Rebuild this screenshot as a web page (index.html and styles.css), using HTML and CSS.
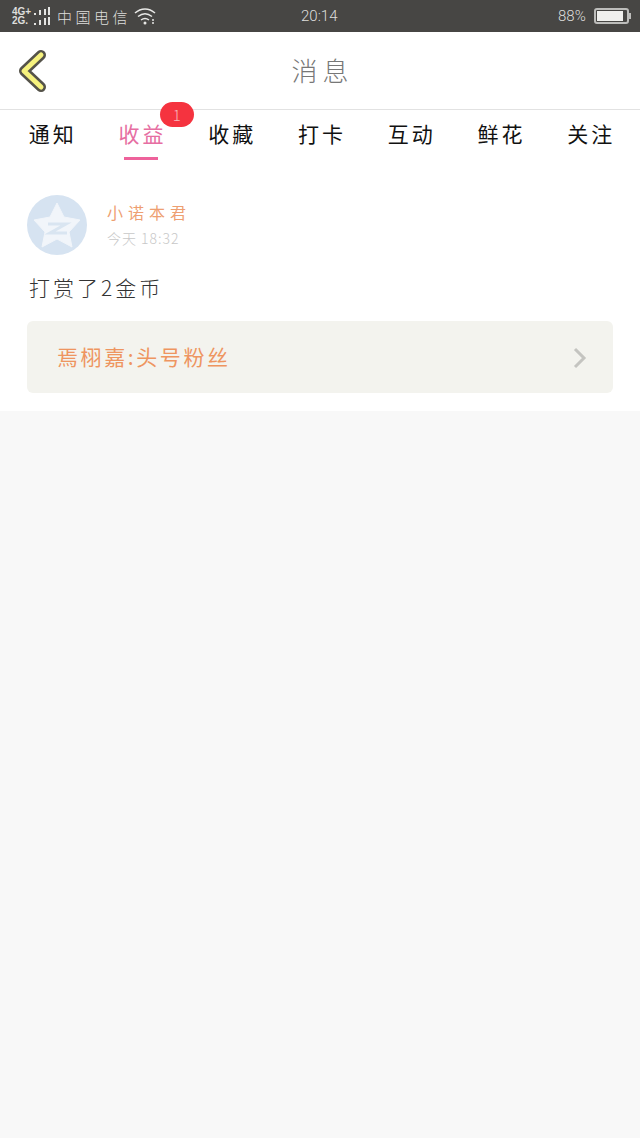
FILE: index.html
```html
<!DOCTYPE html>
<html>
    <head>
        <title>消息</title>
        <link rel="stylesheet" href="styles.css">
    </head>
    <body>
        <div class="status">
            <div class="net"><span>4G+</span><span>2G.</span></div>
            <svg class="signal" width="17" height="18" viewBox="0 0 17 18">
                <path d="M0 6h2v2H0zM5 3h2v5H5zM10 2h2v6h-2zM14 0h2v8h-2z" fill="#e4e4e2"/>
                <path d="M0 16h2v2H0zM5 13h2v5H5zM10 11h2v7h-2zM14 10h2v8h-2z" fill="#e4e4e2"/>
            </svg>
            <span class="carrier">中国电信</span>
            <svg class="wifi" width="22" height="18" viewBox="0 0 22 18">
                <path d="M1 6c6-5.500 14-5.500 20 0M4 9.500c4.500-3.500 9.500-3.500 14 0M7 13c2.500-1.800 5.500-1.800 8 0" fill="none" stroke="#e8e8e6" stroke-width="1.500"/>
                <circle cx="11" cy="16" r="1.500" fill="#e8e8e6"/>
                <path d="M18 12h2v2h-2zM18 15h2v2h-2z" fill="#bdbdbb"/>
            </svg>
            <span class="time">20:14</span>
            <span class="percent">88%</span>
            <div class="battery"><div class="level"></div></div>
            <div class="cap"></div>
        </div>
        <div class="header">
            <svg class="back" width="30" height="44" viewBox="0 0 30 44">
                <path d="M24 6L7 22l17 16" fill="none" stroke="#55534a" stroke-width="10" stroke-linecap="round" stroke-linejoin="round"/>
                <path d="M24 6L7 22l17 16" fill="none" stroke="#f6f27e" stroke-width="5" stroke-linecap="round" stroke-linejoin="round"/>
            </svg>
            <span class="title">消息</span>
        </div>
        <div class="tabs">
            <div class="tab">通知</div>
            <div class="tab active">收益<span class="badge">1</span></div>
            <div class="tab">收藏</div>
            <div class="tab">打卡</div>
            <div class="tab">互动</div>
            <div class="tab">鲜花</div>
            <div class="tab">关注</div>
        </div>
        <div class="item">
            <div class="user">
                <svg class="avatar" width="60" height="60" viewBox="0 0 60 60">
                    <circle cx="30" cy="30" r="30" fill="#d6e3f1"/>
                    <path d="M30 8l7 14 16 3-11 12 3 15-15-8-15 8 3-15L7 25l16-3z" fill="#f1f5fa" stroke="#f1f5fa" stroke-linejoin="round"/>
                    <path d="M21 29h18L23 38h17" fill="none" stroke="#d9e5f1" stroke-width="3"/>
                </svg>
                <div>
                    <div class="name">小诺本君</div>
                    <div class="date">今天 18:32</div>
                </div>
            </div>
            <div class="msg">打赏了2金币</div>
            <div class="card">
                <span class="card-text">焉栩嘉:头号粉丝</span>
                <svg class="more" width="14" height="22" viewBox="0 0 14 22">
                    <path d="M2 2l9 9-9 9" fill="none" stroke="#c4c4c0" stroke-width="3"/>
                </svg>
            </div>
        </div>
    </body>
</html>
```

FILE: styles.css
```css
body {
    margin: 0;
    min-height: 1138px;
    background-color: #f8f8f8;
    font-family: "Noto Sans CJK SC", "Liberation Sans", sans-serif;
    font-weight: 300;
}
.status {
    height: 32px;
    display: flex;
    align-items: center;
    padding: 0 9px 0 12px;
    background-color: #474644;
    color: #dededc;
    box-sizing: border-box;
}
.net {
    display: flex;
    flex-direction: column;
    width: 22px;
    font-family: "Liberation Sans", sans-serif;
    font-size: 10px;
    font-weight: 700;
    line-height: 9px;
}
.carrier {
    margin-left: 6px;
    font-size: 15px;
    letter-spacing: 3.500px;
}
.wifi {
    margin-left: 3px;
}
.time {
    margin-left: 145px;
    width: 257px;
    font-family: "Roboto", sans-serif;
    font-size: 15px;
}
.percent {
    font-family: "Roboto", sans-serif;
    font-size: 15px;
}
.battery {
    margin-left: 8px;
    width: 35px;
    height: 16px;
    padding: 1px;
    border: 2px solid #bdbdbb;
    border-radius: 3px;
    box-sizing: border-box;
}
.level {
    width: 92%;
    height: 100%;
    background-color: #f0f0ee;
}
.cap {
    width: 2px;
    height: 6px;
    background-color: #bdbdbb;
}
.header {
    height: 77px;
    display: flex;
    align-items: center;
    justify-content: center;
    position: relative;
    background-color: white;
    border-bottom: 1px solid #e2e2e2;
}
.back {
    position: absolute;
    left: 17px;
    top: 17px;
}
.title {
    margin-top: -3px;
    padding-left: 5px;
    font-size: 26px;
    letter-spacing: 5px;
    color: #777;
}
.tabs {
    height: 50px;
    display: flex;
    padding: 0 6px;
    background-color: white;
}
.tab {
    flex: 1;
    position: relative;
    padding: 6px 0 0 4px;
    text-align: center;
    font-size: 21px;
    font-weight: 400;
    line-height: 34px;
    letter-spacing: 3px;
    color: #111;
}
.active {
    color: #e66ea2;
}
.active::after {
    content: "";
    position: absolute;
    left: 28px;
    top: 47px;
    width: 34px;
    height: 3px;
    background-color: #ee629b;
}
.badge {
    position: absolute;
    left: 64px;
    top: -8px;
    width: 34px;
    height: 25px;
    border-radius: 13px;
    background-color: #f5333f;
    color: #f8b8bc;
    font-size: 15px;
    font-weight: 300;
    line-height: 25px;
    letter-spacing: 0;
}
.item {
    height: 251px;
    padding: 35px 27px 0;
    box-sizing: border-box;
    background-color: white;
}
.user {
    display: flex;
    gap: 20px;
}
.name {
    margin-top: 5px;
    font-size: 16px;
    font-weight: 400;
    line-height: 24px;
    letter-spacing: 5px;
    color: #ee9f72;
}
.date {
    margin-top: 4px;
    font-size: 14px;
    line-height: 20px;
    letter-spacing: 1px;
    color: #c8c8c8;
}
.msg {
    margin-top: 17px;
    padding-left: 2px;
    font-size: 21px;
    line-height: 30px;
    letter-spacing: 3px;
    color: #333;
}
.card {
    height: 72px;
    margin-top: 19px;
    display: flex;
    align-items: center;
    justify-content: space-between;
    padding: 0 26px 0 30px;
    border-radius: 6px;
    background-color: #f3f3ee;
}
.card-text {
    margin-top: -2px;
    font-size: 21px;
    font-weight: 400;
    letter-spacing: 2.600px;
    color: #ee9560;
}
.more {
    margin-top: 2px;
}
```
